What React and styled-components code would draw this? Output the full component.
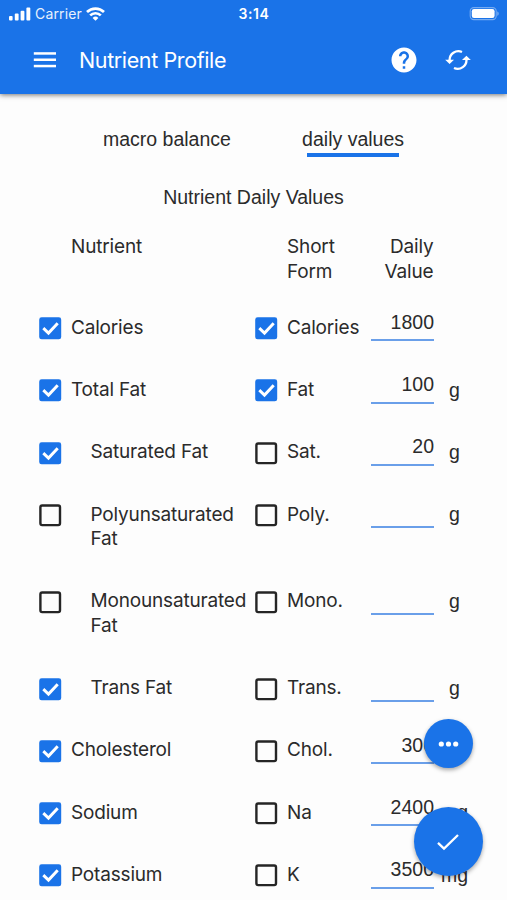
import React, { useState } from "react";
import styled, { createGlobalStyle } from "styled-components";
import { MdHelp } from "react-icons/md";

const nutrients = [
  { name: "Calories", short: "Calories", value: "1800", unit: "", shown: true, shortShown: true },
  { name: "Total Fat", short: "Fat", value: "100", unit: "g", shown: true, shortShown: true },
  { name: "Saturated Fat", short: "Sat.", value: "20", unit: "g", shown: true, sub: true },
  { name: "Polyunsaturated Fat", short: "Poly.", value: "", unit: "g", sub: true },
  { name: "Monounsaturated Fat", short: "Mono.", value: "", unit: "g", sub: true },
  { name: "Trans Fat", short: "Trans.", value: "", unit: "g", shown: true, sub: true },
  { name: "Cholesterol", short: "Chol.", value: "300", unit: "mg", shown: true },
  { name: "Sodium", short: "Na", value: "2400", unit: "mg", shown: true },
  { name: "Potassium", short: "K", value: "3500", unit: "mg", shown: true },
];

export default function App() {
  const [items, setItems] = useState(nutrients);

  const update = (index, key, value) => {
    setItems(items.map((item, i) => (i === index ? { ...item, [key]: value } : item)));
  };

  return (
    <Screen>
      <GlobalStyle />
      <Header>
        <StatusBar>
          <Carrier>
            <SignalIcon />
            <span>Carrier</span>
            <WifiIcon />
          </Carrier>
          <Time>3:14</Time>
          <BatteryIcon />
        </StatusBar>
        <Toolbar>
          <MenuIcon />
          <PageTitle>Nutrient Profile</PageTitle>
          <MdHelp size={30} />
          <SyncIcon />
        </Toolbar>
      </Header>
      <Tabs>
        <Tab>macro balance</Tab>
        <Tab $active>daily values</Tab>
      </Tabs>
      <Heading>Nutrient Daily Values</Heading>
      <TableHead>
        <HeadCell $start={2}>Nutrient</HeadCell>
        <HeadCell $start={4}>Short Form</HeadCell>
        <HeadCell $start={5} $right>Daily Value</HeadCell>
      </TableHead>
      {items.map((item, index) => (
        <Row key={item.name}>
          <CheckBox checked={item.shown} onClick={() => update(index, "shown", !item.shown)} />
          <Label $sub={item.sub}>{item.name}</Label>
          <CheckBox checked={item.shortShown} onClick={() => update(index, "shortShown", !item.shortShown)} />
          <Label>{item.short}</Label>
          <ValueInput value={item.value} onChange={(e) => update(index, "value", e.target.value)} />
          <Unit>{item.unit}</Unit>
        </Row>
      ))}
      <FabGroup>
        <Fab $size={49}>
          <svg width="21" height="8" viewBox="0 0 21 8" fill="#fff">
            <circle cx="3.3" cy="4" r="2.6" />
            <circle cx="10.5" cy="4" r="2.6" />
            <circle cx="17.7" cy="4" r="2.6" />
          </svg>
        </Fab>
        <Fab $size={69}>
          <svg width="24" height="18" viewBox="0 0 24 18" fill="none" stroke="#fff" strokeWidth="2.3">
            <path d="M2 9.8l6 5.8L22 2" />
          </svg>
        </Fab>
      </FabGroup>
    </Screen>
  );
}

function CheckBox({ checked, onClick }) {
  return (
    <Box role="checkbox" aria-checked={!!checked} onClick={onClick}>
      <svg width="23" height="23" viewBox="0 0 23 23" fill="none">
        {checked ? (
          <>
            <rect x="0.2" y="0.3" width="22" height="22" rx="2.4" fill="#1a73e8" />
            <path d="M4.3 11.1l5.2 5L18.7 6.2" stroke="#fff" strokeWidth="2.9" />
          </>
        ) : (
          <rect x="1.4" y="1.5" width="19.6" height="19.6" rx="1.8" stroke="#252525" strokeWidth="2.4" />
        )}
      </svg>
    </Box>
  );
}

function SignalIcon() {
  return (
    <svg width="22" height="14" viewBox="0 0 22 14" fill="#fff">
      <rect x="0" y="9" width="3.6" height="4.4" rx="1" />
      <rect x="5.8" y="6.6" width="3.8" height="6.8" rx="1" />
      <rect x="11.6" y="3.7" width="3.8" height="9.7" rx="1" />
      <rect x="17.4" y="0.4" width="3.9" height="13" rx="1" />
    </svg>
  );
}

function WifiIcon() {
  return (
    <svg width="19" height="14" viewBox="0 0 19 14" fill="none" stroke="#fff" strokeWidth="2.7">
      <path d="M1 5a12.2 12.2 0 0 1 17 0" />
      <path d="M4.2 8.4a7.6 7.6 0 0 1 10.6 0" />
      <path d="M9.5 13.7L6.6 10.9a4.2 4.2 0 0 1 5.8 0z" fill="#fff" stroke="none" />
    </svg>
  );
}

function BatteryIcon() {
  return (
    <svg width="30" height="14" viewBox="0 0 30 14" fill="none">
      <rect x="1.2" y="0.6" width="26" height="12" rx="3.6" stroke="#fff" strokeOpacity="0.4" strokeWidth="1.1" />
      <rect x="2.8" y="2" width="22.8" height="9" rx="2.2" fill="#fff" />
      <path d="M28.4 4.6c1.6.5 1.6 3.7 0 4.2z" fill="#fff" fillOpacity="0.5" />
    </svg>
  );
}

function MenuIcon() {
  return (
    <svg width="23" height="16" viewBox="0 0 23 16" fill="#fff">
      <rect x="0.8" y="0.2" width="22.2" height="2.5" />
      <rect x="0.8" y="6.5" width="22.2" height="2.5" />
      <rect x="0.8" y="12.8" width="22.2" height="2.5" />
    </svg>
  );
}

function SyncIcon() {
  return (
    <svg width="26" height="22" viewBox="0 0 26 22" fill="none" stroke="#fff" strokeWidth="2.3">
      <path d="M4.6 11.5A8.8 8.8 0 0 1 17 3" />
      <path d="M21.4 10A8.8 8.8 0 0 1 9 19" />
      <path d="M0.2 10.8h8.8L4.6 15z" fill="#fff" stroke="none" />
      <path d="M17 11h8.8L21.4 6.8z" fill="#fff" stroke="none" />
    </svg>
  );
}

const GlobalStyle = createGlobalStyle`
  * {
    box-sizing: border-box;
  }
  body {
    margin: 0;
    background: #fdfdfd;
    overflow: hidden;
  }
`;

const Screen = styled.div`
  height: 900px;
  overflow: hidden;
  color: #2b2b2b;
  background: #fdfdfd;
  font-family: Inter, sans-serif;
  font-size: 19px;
  line-height: 24.5px;
`;

const Header = styled.header`
  height: 94px;
  color: #fff;
  background: #1a73e8;
  box-shadow: 0 1px 5px rgba(0, 0, 0, 0.55);
`;

const StatusBar = styled.div`
  display: grid;
  grid-template-columns: 1fr auto 1fr;
  align-items: center;
  height: 27px;
  padding: 0 8px 0 9px;
  font-size: 14px;

  > svg {
    justify-self: end;
  }
`;

const Carrier = styled.div`
  display: flex;
  align-items: center;
  gap: 4px;

  span {
    padding-top: 1px;
    letter-spacing: 0.15px;
    opacity: 0.9;
  }
`;

const Time = styled.div`
  padding-top: 1px;
  font-weight: 600;
  letter-spacing: 0.6px;
`;

const Toolbar = styled.div`
  display: flex;
  align-items: center;
  height: 66px;
  padding: 0 36px 0 33px;

  > svg:last-child {
    margin-left: 26px;
  }
`;

const PageTitle = styled.h1`
  flex: 1;
  margin: 0 0 0 23px;
  font-size: 21.5px;
  font-weight: 400;
  letter-spacing: -0.38px;
`;

const Tabs = styled.nav`
  display: flex;
  justify-content: space-between;
  padding: 33px 103px 0;
  font-family: "Liberation Sans", sans-serif;
  font-size: 19.5px;
`;

const Tab = styled.div`
  display: flex;
  flex-direction: column;
  align-items: center;

  &::after {
    content: "";
    width: 92px;
    height: 4px;
    margin-top: 1px;
    background: ${({ $active }) => ($active ? "#1a73e8" : "transparent")};
  }
`;

const Heading = styled.h2`
  margin: 28px 0 0;
  font-family: "Liberation Sans", sans-serif;
  font-size: 19.5px;
  font-weight: 400;
  text-align: center;
`;

const Row = styled.div`
  display: grid;
  grid-template-columns: 32px 184px 32px 83.5px 63px 28px;
  align-items: start;
  padding: 0 0 37.8px 39px;

  > :last-child {
    margin-left: 7px;
  }
`;

const TableHead = styled(Row)`
  padding-top: 26px;
  padding-bottom: 30.7px;

  > :last-child {
    margin-left: 0;
  }
`;

const HeadCell = styled.div`
  grid-column-start: ${({ $start }) => $start};
  width: ${({ $right }) => ($right ? "auto" : "70px")};
  letter-spacing: -0.15px;
  text-align: ${({ $right }) => ($right ? "right" : "left")};
`;

const Label = styled.div`
  padding-left: ${({ $sub }) => ($sub ? "19.5px" : "0")};
  margin: 1px -4px -1px 0;
  letter-spacing: -0.18px;
`;

const Box = styled.div`
  display: flex;
  width: 23px;
  height: 23px;
  margin: 2.4px 0 -4px;
`;

const ValueInput = styled.input`
  width: 63.5px;
  height: 27px;
  margin: -0.4px 0 -4px;
  padding: 0 0 9px;
  border: none;
  border-bottom: 2px solid #6a9fe9;
  border-radius: 0;
  outline: none;
  color: #2b2b2b;
  background: transparent;
  font-family: "Liberation Sans", sans-serif;
  font-size: 19.5px;
  text-align: right;
`;

const Unit = styled.div`
  width: 28px;
  margin: 0.7px 0 -0.7px;
  font-family: "Liberation Sans", sans-serif;
  font-size: 19.5px;
  text-align: center;
`;

/* floats over the list */
const FabGroup = styled.div`
  position: fixed;
  right: 24.5px;
  bottom: 24px;
  display: flex;
  flex-direction: column;
  align-items: center;
  gap: 39px;
`;

const Fab = styled.button`
  display: flex;
  align-items: center;
  justify-content: center;
  width: ${({ $size }) => $size}px;
  height: ${({ $size }) => $size}px;
  padding: 0;
  border: none;
  border-radius: 50%;
  background: #1a73e8;
  box-shadow: 0 2px 4px rgba(0, 0, 0, 0.35);
`;
